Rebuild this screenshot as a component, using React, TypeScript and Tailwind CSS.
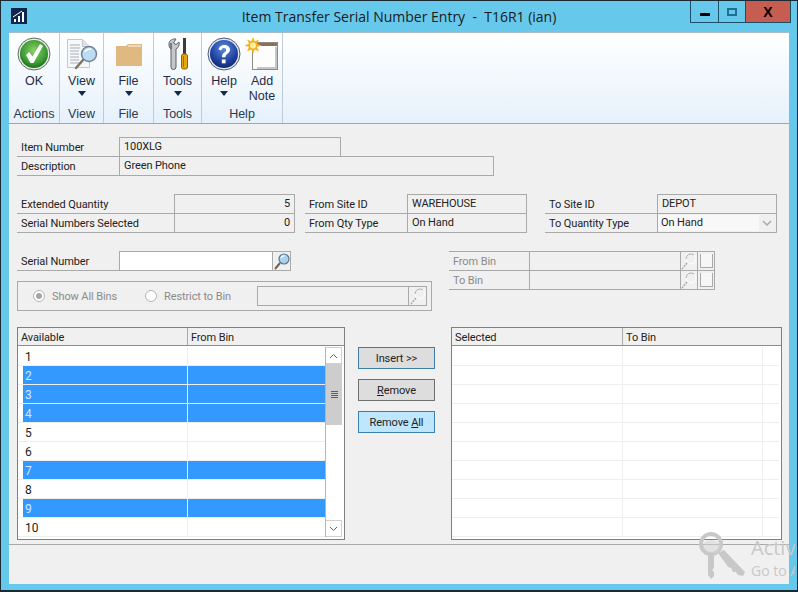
import type { ReactNode } from "react";

const OkIcon = () => (
  <svg width="34" height="34" viewBox="0 0 34 34">
    <defs>
      <radialGradient id="okg" cx="50%" cy="40%" r="60%">
        <stop offset="0%" stopColor="#8fd06a" />
        <stop offset="70%" stopColor="#3f9e35" />
        <stop offset="100%" stopColor="#1d6e1f" />
      </radialGradient>
    </defs>
    <circle cx="17" cy="17" r="16" fill="#e8eee8" stroke="#5e6e5e" strokeWidth="1" />
    <circle cx="17" cy="17" r="14" fill="url(#okg)" />
    <path d="M9 18l3-3 3.500 4.500L23 7l3 2-9.500 17h-3z" fill="#fff" />
  </svg>
);

const ViewIcon = () => (
  <svg width="34" height="34" viewBox="0 0 34 34">
    <path d="M2.500 2.500h15l7 7v21h-22z" fill="#f7f8fa" stroke="#c2c7ce" />
    <path d="M17.500 2.500v7h7" fill="#dfe3e8" stroke="#c2c7ce" />
    <path d="M5 8h10M5 11h10M5 14h9M5 17h9M5 20h9M5 23h9M5 26h12" stroke="#a5adb8" strokeWidth="1" />
    <path d="M18 23l-7 8" stroke="#7f7466" strokeWidth="2.500" strokeLinecap="round" />
    <circle cx="24" cy="17" r="7.500" fill="#bcdcf2" stroke="#6f8296" strokeWidth="1.500" />
    <path d="M20 15c1-2.500 4-3.500 6-2.500" stroke="#fff" strokeWidth="1.500" fill="none" />
  </svg>
);

const FolderIcon = () => (
  <svg width="30" height="26" viewBox="0 0 30 26">
    <path d="M2 5h10l2-2h14v22H2z" fill="#dfb980" />
    <path d="M14 5h13" stroke="#f3e3c8" strokeWidth="1.500" />
  </svg>
);

const ToolsIcon = () => (
  <svg width="24" height="34" viewBox="0 0 24 34">
    <path d="M5 6V13v17a2.500 2.500 0 0 0 5 0V12c3-1.500 3.500-4.500 3-7l-3 2.500L7.500 6 10 2C7 1.500 3.500 3 3 6.500c-.3 2.500.5 4.500 2 5.500z" fill="#c4c8cb" stroke="#5a6066" strokeWidth="1" />
    <rect x="17" y="1" width="3" height="16" fill="#3a3a36" />
    <rect x="15.500" y="17" width="6" height="15" rx="2" fill="#e3a80e" stroke="#8a6306" strokeWidth="1" />
    <path d="M17.500 19v11" stroke="#a06f00" strokeWidth="1" />
  </svg>
);

const HelpIcon = () => (
  <svg width="34" height="34" viewBox="0 0 34 34">
    <defs>
      <radialGradient id="hg" cx="50%" cy="30%" r="70%">
        <stop offset="0%" stopColor="#5d8be0" />
        <stop offset="70%" stopColor="#1d3f9e" />
        <stop offset="100%" stopColor="#122a70" />
      </radialGradient>
    </defs>
    <circle cx="17" cy="17" r="16" fill="#e4e8f0" stroke="#4a5a80" strokeWidth="1" />
    <circle cx="17" cy="17" r="14" fill="url(#hg)" />
    <path d="M11.500 12.500c.5-3 3-4.500 5.500-4.500 3.500 0 6 2 6 4.800 0 2.200-1.500 3.300-3 4.400-1.200.9-1.500 1.500-1.500 3h-3.500c0-2.500.8-3.600 2.300-4.700 1-.8 1.900-1.400 1.900-2.500 0-1.200-1-1.900-2.300-1.900-1.400 0-2.300.8-2.600 2.300z" fill="#fff" />
    <rect x="14.800" y="22.500" width="3.800" height="3.800" fill="#fff" />
  </svg>
);

const NoteIcon = () => (
  <svg width="34" height="34" viewBox="0 0 34 34">
    <rect x="7.500" y="5.500" width="25" height="27" fill="#fdfdfd" stroke="#8d8a84" />
    <rect x="8" y="6" width="24" height="3" fill="#8f6f5a" />
    <path d="M31 10v21H12" stroke="#c6c6c6" strokeWidth="2" fill="none" />
    <path d="M8 0l1.700 4.500L14 2.500l-2 4.300 4.500 1.700L12 10l2 4.500-4.300-2L8 17l-1.700-4.500L2 14.500 4 10-.5 8.500 4 6.800 2 2.500l4.300 2z" fill="#f5b21c" />
    <circle cx="8" cy="8.500" r="3" fill="#fff2a8" />
  </svg>
);

const LookupIcon = ({ off }: { off?: boolean }) =>
  off ? (
    <svg width="16" height="17" viewBox="0 0 16 17">
      <circle cx="10" cy="6" r="5" fill="none" stroke="#fff" strokeWidth="1" />
      <path d="M5 6a5 5 0 0 1 8-4" fill="none" stroke="#a9a9a9" strokeWidth="1" />
      <path d="M6 10l-5 6" stroke="#a9a9a9" strokeWidth="1.500" strokeDasharray="2 1" />
    </svg>
  ) : (
    <svg width="16" height="17" viewBox="0 0 16 17">
      <path d="M6 10l-5 6" stroke="#6b6459" strokeWidth="2" />
      <circle cx="10" cy="6" r="5" fill="#a9d2ee" stroke="#5d7488" strokeWidth="1.200" />
      <path d="M7 5c.5-1.500 2-2.200 3.500-2" stroke="#fff" strokeWidth="1.200" fill="none" />
    </svg>
  );

const Caret = () => (
  <span className="mx-auto mt-[2px] h-0 w-0 border-x-[4px] border-t-[5px] border-x-transparent border-t-[#14284b]" />
);

const RibbonBtn = ({ label, icon, caret, w }: { label: ReactNode; icon: ReactNode; caret?: boolean; w: string }) => (
  <div className={`flex flex-col items-center ${w}`}>
    <div className="flex h-[37px] items-center justify-center">{icon}</div>
    <div className="mt-[2px] text-center leading-[15px]">{label}</div>
    {caret && <Caret />}
  </div>
);

const RibbonGroup = ({ title, w, children }: { title: string; w: string; children: ReactNode }) => (
  <div className={`flex h-full flex-col border-r border-[#bfcbd6] ${w}`}>
    <div className="flex h-[72px] justify-center pt-[2px]">{children}</div>
    <div className="h-[18px] text-center leading-[19px] text-[#2a3a50]">{title}</div>
  </div>
);

const Field = ({
  label,
  labelW,
  valueW,
  value,
  right,
  top,
  last,
  children,
}: {
  label: string;
  labelW: string;
  valueW: string;
  value?: string;
  right?: boolean;
  top?: boolean;
  last?: boolean;
  children?: ReactNode;
}) => (
  <div className={`flex ${last ? "h-[20px]" : "h-[19px]"}`}>
    <div className={`flex items-center pl-[4px] pt-[3px] border-[#a9a9a9] ${labelW} ${top ? "border-t" : ""} ${last ? "border-b" : ""}`}>
      {label}
    </div>
    <div className={`flex items-center border-x border-t border-[#a9a9a9] px-[4px] ${valueW} ${last ? "border-b" : ""} ${right ? "justify-end" : ""}`}>
      {value}
      {children}
    </div>
  </div>
);

const DisabledRow = ({ label, top, last }: { label: string; top?: boolean; last?: boolean }) => (
  <div className={`flex ${last ? "h-[20px]" : "h-[19px]"}`}>
    <div className={`flex w-[80px] items-center border-[#a9a9a9] pl-[4px] pt-[3px] text-[#8a8a8a] ${top ? "border-t" : ""} ${last ? "border-b" : ""}`}>
      {label}
    </div>
    <div className={`w-[152px] border-x border-t border-[#a9a9a9] ${last ? "border-b" : ""}`} />
    <div className={`flex w-[17px] items-center justify-center border-r border-t border-[#a9a9a9] ${last ? "border-b" : ""}`}>
      <LookupIcon off />
    </div>
    <div className={`flex w-[17px] items-center justify-center border-r border-t border-[#a9a9a9] ${last ? "border-b" : ""}`}>
      <span className="h-[14px] w-[13px] border-x border-b border-[#a9a9a9] bg-[#f6f6f6]" />
    </div>
  </div>
);

const Radio = ({ checked, label }: { checked?: boolean; label: string }) => (
  <div className="flex w-[112px] items-center gap-[7px] text-[#8a8a8a]">
    <span className="flex h-[12px] w-[12px] items-center justify-center rounded-full border border-[#b5b5b5] bg-white">
      {checked && <span className="h-[6px] w-[6px] rounded-full bg-[#a5a5a5]" />}
    </span>
    <span className="pt-[2px]">{label}</span>
  </div>
);

const TableHeader = ({ a, b, aW }: { a: string; b: string; aW: string }) => (
  <div className="flex h-[18px] border-b border-[#8c8c8c] bg-[#f0f0f0]">
    <div className={`flex items-center border-r border-[#a9a9a9] pl-[3px] pt-[4px] ${aW}`}>{a}</div>
    <div className="flex items-center pl-[3px] pt-[4px]">{b}</div>
  </div>
);

const rows = ["1", "2", "3", "4", "5", "6", "7", "8", "9", "10"];
const selected = ["2", "3", "4", "7", "9"];

const Scrollbar = () => (
  <div className="mr-[2px] flex h-[190px] w-[17px] flex-col border-l border-[#b5b5b5] bg-white">
    <div className="flex h-[17px] items-center justify-center border border-l-0 border-[#d0d0d0] text-[#555]">
      <svg width="9" height="6" viewBox="0 0 9 6"><path d="M1 5l3.500-3.500L8 5" fill="none" stroke="#606060" /></svg>
    </div>
    <div className="flex h-[61px] flex-col items-center justify-center gap-px bg-[#cdcdcd]">
      <span className="h-px w-[7px] bg-[#606060]" />
      <span className="h-px w-[7px] bg-[#606060]" />
      <span className="h-px w-[7px] bg-[#606060]" />
      <span className="h-px w-[7px] bg-[#606060]" />
    </div>
    <div className="flex-1" />
    <div className="flex h-[17px] items-center justify-center border border-l-0 border-[#d0d0d0]">
      <svg width="9" height="6" viewBox="0 0 9 6"><path d="M1 1l3.500 3.500L8 1" fill="none" stroke="#606060" /></svg>
    </div>
  </div>
);

const ActionBtn = ({ className, children }: { className: string; children: ReactNode }) => (
  <div className={`flex h-[22px] items-center justify-center border pt-[2px] ${className}`}>{children}</div>
);

export default function App() {
  return (
    <div className="relative flex h-[592px] w-[798px] flex-col overflow-hidden border-x border-t border-b-2 border-[#1c2b33] bg-[#66c9ec] font-['Roboto',sans-serif] text-[11px] tracking-[-0.1px] text-[#222]">
      {/* title bar */}
      <div className="grid h-[31px] shrink-0 grid-cols-[1fr_auto_1fr] tracking-normal">
        <div className="flex items-start pl-[10px] pt-[7px]">
          <svg width="16" height="16" viewBox="0 0 16 16">
            <rect width="16" height="16" fill="#10264f" />
            <path d="M3 14v-3h2v3zM7 14V8h2v6zM11 14V4h2v10z" fill="#fff" />
            <path d="M2 9l9-6" stroke="#fff" strokeWidth="1" />
          </svg>
        </div>
        <div className="pt-[6px] font-['Open_Sans',sans-serif] text-[14px] leading-[20px] whitespace-pre text-[#1a1a1a]">
          Item Transfer Serial Number Entry  -  T16R1 (ian)
        </div>
        <div className="flex items-start justify-end">
          <div className="flex h-[22px] border-b border-l border-[#1d5068]">
            <div className="flex w-[28px] items-end justify-center border-r border-[#1d5068] pb-[6px]">
              <span className="h-[3px] w-[10px] bg-black" />
            </div>
            <div className="flex w-[26px] items-center justify-center">
              <span className="h-[8px] w-[10px] border-2 border-[#1f6f92]" />
            </div>
            <div className="flex w-[46px] items-center justify-center border-x border-[#1d5068] bg-[#c75c50] pt-px font-['Liberation_Sans',sans-serif] text-[14px] font-bold text-black">
              X
            </div>
          </div>
          <div className="w-[6px]" />
        </div>
      </div>

      <div className="mx-[8px] flex h-[552px] flex-col bg-[#f0f0f0]">
        {/* ribbon */}
        <div className="flex h-[92px] shrink-0 border-y border-t-[#a8bccb] border-b-[#a6a6a6] bg-gradient-to-b from-white to-[#e6f1fb] font-['Liberation_Sans',sans-serif] text-[12.5px] tracking-normal text-[#1e2c44]">
          <RibbonGroup title="Actions" w="w-[51px]">
            <RibbonBtn w="w-[44px]" label="OK" icon={<OkIcon />} />
          </RibbonGroup>
          <RibbonGroup title="View" w="w-[44px]">
            <RibbonBtn w="w-[40px]" label="View" caret icon={<ViewIcon />} />
          </RibbonGroup>
          <RibbonGroup title="File" w="w-[50px]">
            <RibbonBtn w="w-[40px]" label="File" caret icon={<FolderIcon />} />
          </RibbonGroup>
          <RibbonGroup title="Tools" w="w-[48px]">
            <RibbonBtn w="w-[40px]" label="Tools" caret icon={<ToolsIcon />} />
          </RibbonGroup>
          <RibbonGroup title="Help" w="w-[81px]">
            <RibbonBtn w="w-[40px]" label="Help" caret icon={<HelpIcon />} />
            <RibbonBtn w="w-[36px]" label={<>Add<br />Note</>} icon={<NoteIcon />} />
          </RibbonGroup>
        </div>

        <div className="flex flex-1 flex-col pl-[8px] pt-[13px]">
          {/* item */}
          <div className="flex flex-col">
            <Field label="Item Number" labelW="w-[102px]" valueW="w-[222px]" value="100XLG" />
            <Field label="Description" labelW="w-[102px]" valueW="w-[375px]" value="Green Phone" top last />
          </div>

          {/* quantities and sites */}
          <div className="mt-[18px] flex">
            <div className="flex flex-col">
              <Field label="Extended Quantity" labelW="w-[157px]" valueW="w-[121px]" value="5" right />
              <Field label="Serial Numbers Selected" labelW="w-[157px]" valueW="w-[121px]" value="0" right top last />
            </div>
            <div className="ml-[10px] flex flex-col">
              <Field label="From Site ID" labelW="w-[102px]" valueW="w-[120px]" value="WAREHOUSE" />
              <Field label="From Qty Type" labelW="w-[102px]" valueW="w-[120px]" value="On Hand" top last />
            </div>
            <div className="ml-[18px] flex flex-col">
              <Field label="To Site ID" labelW="w-[112px]" valueW="w-[120px]" value="DEPOT" />
              <Field label="To Quantity Type" labelW="w-[112px]" valueW="w-[120px]" top last>
                <div className="-ml-[4px] flex h-[16px] w-[101px] items-center bg-[#f8f8f8] pl-[3px]">On Hand</div>
                <svg className="ml-auto" width="10" height="6" viewBox="0 0 10 6">
                  <path d="M1 1l4 4 4-4" fill="none" stroke="#a9a9a9" strokeWidth="1.500" />
                </svg>
              </Field>
            </div>
          </div>

          {/* serial number and bins */}
          <div className="mt-[18px] flex">
            <div className="flex w-[432px] flex-col">
              <div className="flex h-[20px]">
                <div className="flex w-[102px] items-center border-b border-[#a9a9a9] pl-[4px] pt-[3px]">Serial Number</div>
                <div className="w-[154px] border border-[#a9a9a9] bg-white" />
                <div className="flex w-[18px] items-center justify-center border-y border-r border-[#a9a9a9]">
                  <LookupIcon />
                </div>
              </div>
              <div className="mt-[10px] flex h-[30px] w-[415px] items-center border border-[#a9a9a9] pl-[15px]">
                <Radio checked label="Show All Bins" />
                <Radio label="Restrict to Bin" />
                <div className="flex h-[20px] w-[170px] border border-[#a9a9a9]">
                  <div className="flex-1 border-r border-[#a9a9a9]" />
                  <div className="flex w-[17px] items-center justify-center">
                    <LookupIcon off />
                  </div>
                </div>
              </div>
            </div>
            <div className="flex flex-col">
              <DisabledRow label="From Bin" top />
              <DisabledRow label="To Bin" top last />
            </div>
          </div>

          {/* lists */}
          <div className="mt-[16px] flex">
            <div className="flex h-[213px] w-[328px] flex-col border border-[#7f7f7f] bg-white">
              <TableHeader a="Available" b="From Bin" aW="w-[170px]" />
              <div className="mt-px flex">
                <div className="flex-1">
                  {rows.map((r) => {
                    const on = selected.includes(r);
                    return (
                      <div key={r} className="flex h-[19px] border-b border-[#eeeeee]">
                        <div className={`ml-[5px] flex w-[164px] items-center pl-[2px] pt-px text-[12px] ${on ? "bg-[#3399ff] text-[#d5e8ff]" : "text-[#222]"}`}>
                          {r}
                        </div>
                        <div className={`flex-1 border-l border-[#eeeeee] ${on ? "bg-[#3399ff]" : ""}`} />
                      </div>
                    );
                  })}
                </div>
                <Scrollbar />
              </div>
            </div>

            <div className="ml-[13px] flex w-[77px] flex-col gap-[10px] pt-[20px]">
              <ActionBtn className="border-[#3f7ea6] bg-[#dddddd]">Insert &gt;&gt;</ActionBtn>
              <ActionBtn className="border-[#707070] bg-[#dddddd]">
                <span><u>R</u>emove</span>
              </ActionBtn>
              <ActionBtn className="border-[#3c7fb1] bg-[#bee6fd]">
                <span>Remove <u>A</u>ll</span>
              </ActionBtn>
            </div>

            <div className="ml-[16px] flex h-[213px] w-[331px] flex-col border border-[#7f7f7f] bg-white">
              <TableHeader a="Selected" b="To Bin" aW="w-[171px]" />
              <div className="mt-px pr-[2px]">
                {rows.map((r) => (
                  <div key={r} className="flex h-[19px] border-b border-[#eeeeee]">
                    <div className="w-[171px] border-r border-[#eeeeee]" />
                    <div className="w-[140px] border-r border-[#eeeeee]" />
                  </div>
                ))}
              </div>
            </div>
          </div>

          <div className="-ml-[8px] mt-[4px] border-t border-[#a9a9a9]" />
        </div>
      </div>

      {/* activation watermark */}
      <svg className="absolute left-[697px] top-[530px]" width="48" height="50" viewBox="0 0 48 50">
        <circle cx="13" cy="13" r="10" fill="none" stroke="#c8c8c8" strokeWidth="4" />
        <path d="M6 12c4-4 10-4 14 0l3 3-2 5-2 2-10 0-4-6z" fill="#d4d4d4" opacity="0.5" />
        <path d="M10 23v21l3 4 3-3v-4l-2-2 2-2v-14z" fill="#c8c8c8" />
        <path d="M20 22l6-3 21 22-2 4-5-1-2-3-3 0-2-4-3-1-2-3z" fill="#c8c8c8" />
      </svg>
      <div className="absolute left-[750px] top-[533px] w-[44px] overflow-hidden font-['Open_Sans',sans-serif] tracking-normal text-[#c8c8c8]">
        <div className="text-[20px] leading-[27px]">Activate</div>
        <div className="text-[14px] leading-[20px] whitespace-nowrap">Go to Action</div>
      </div>
    </div>
  );
}
